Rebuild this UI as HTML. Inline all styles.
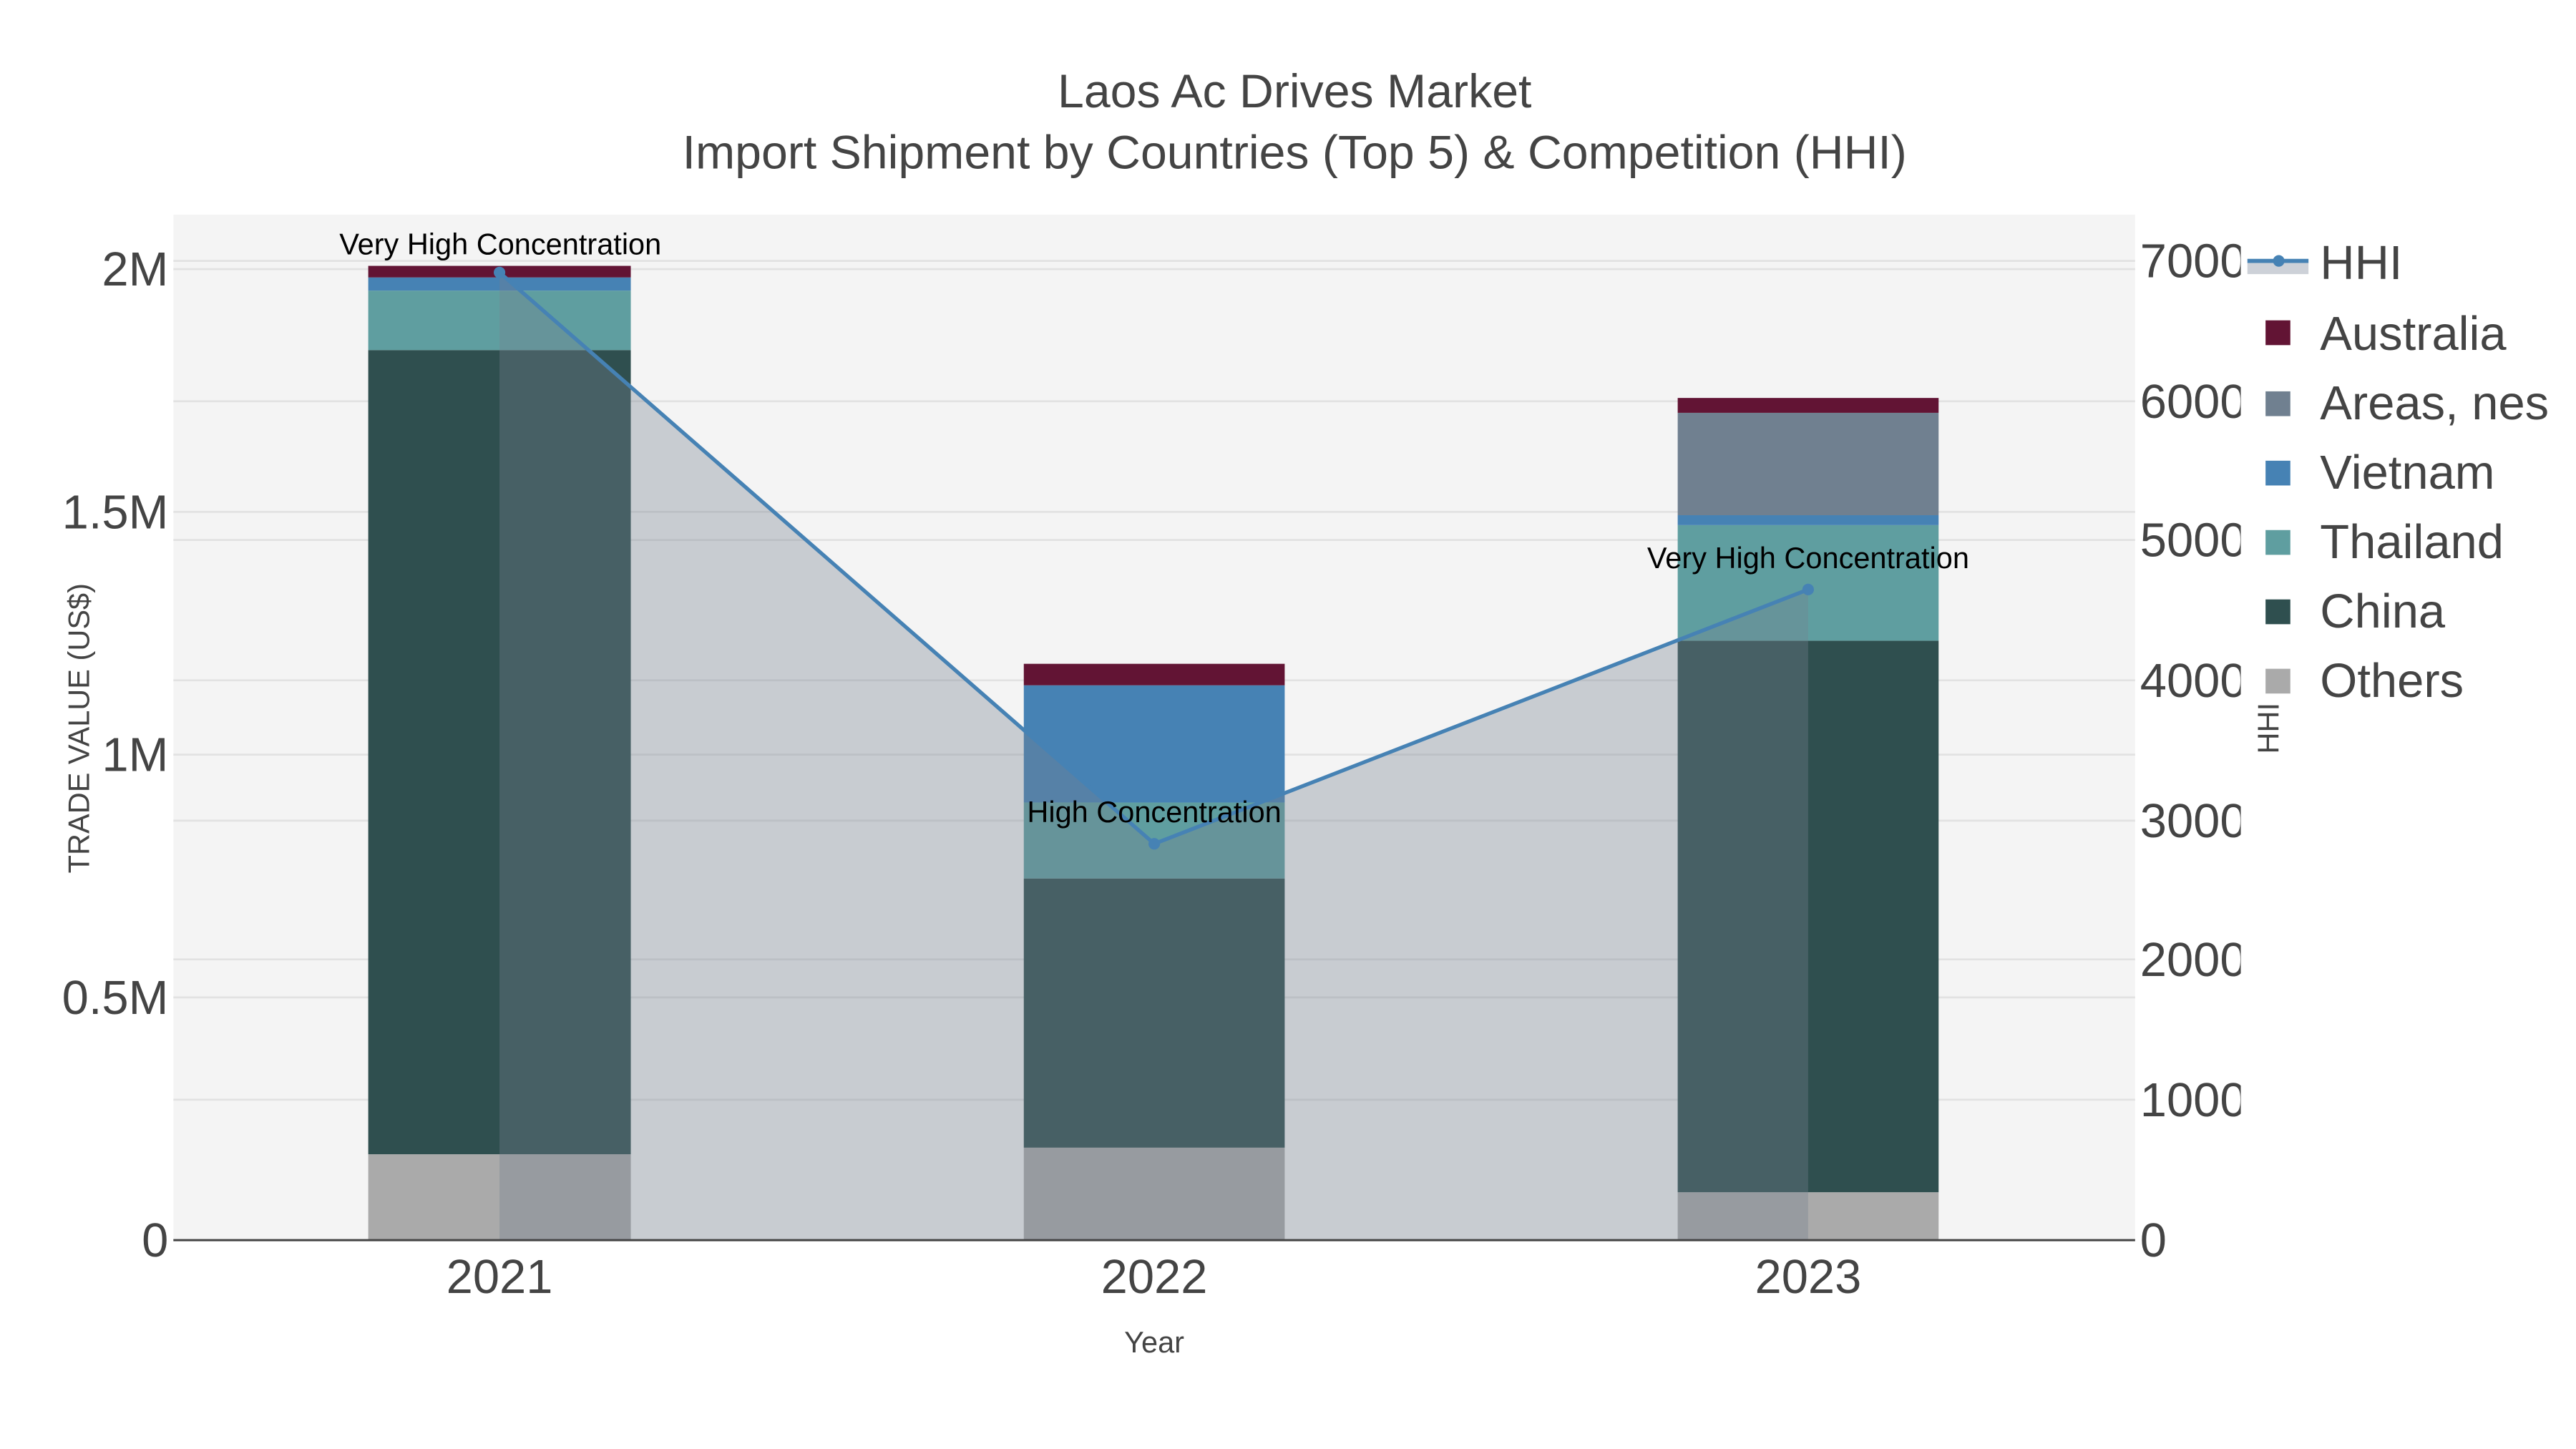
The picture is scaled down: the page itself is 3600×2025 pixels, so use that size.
<!DOCTYPE html>
<html><head><meta charset="utf-8"><style>
html,body{margin:0;padding:0;background:#fff;}
svg{display:block;}
text{font-family:"Liberation Sans",Arial,sans-serif;}
</style></head><body>
<svg width="3600" height="2025" viewBox="0 0 1560 877.5" xmlns="http://www.w3.org/2000/svg">
<rect x="0" y="0" width="1560" height="877.5" fill="#fff"/>
<rect x="105" y="130" width="1188" height="621" fill="#f4f4f4"/>
<g stroke="#e2e2e2" stroke-width="1.2">
<line x1="105" x2="1293" y1="163" y2="163"/><line x1="105" x2="1293" y1="310" y2="310"/>
<line x1="105" x2="1293" y1="457" y2="457"/><line x1="105" x2="1293" y1="604" y2="604"/>
<line x1="105" x2="1293" y1="158" y2="158"/><line x1="105" x2="1293" y1="243" y2="243"/>
<line x1="105" x2="1293" y1="327" y2="327"/><line x1="105" x2="1293" y1="412" y2="412"/>
<line x1="105" x2="1293" y1="497" y2="497"/><line x1="105" x2="1293" y1="581" y2="581"/>
<line x1="105" x2="1293" y1="666" y2="666"/>
</g>
<rect x="223" y="699" width="159" height="52" fill="#aaaaaa"/>
<rect x="223" y="212" width="159" height="487" fill="#2f4f4f"/>
<rect x="223" y="176" width="159" height="36" fill="#5f9ea0"/>
<rect x="223" y="168" width="159" height="8" fill="#4682b4"/>
<rect x="223" y="161" width="159" height="7" fill="#621434"/>
<rect x="620" y="695" width="158" height="56" fill="#aaaaaa"/>
<rect x="620" y="532" width="158" height="163" fill="#2f4f4f"/>
<rect x="620" y="486" width="158" height="46" fill="#5f9ea0"/>
<rect x="620" y="415" width="158" height="71" fill="#4682b4"/>
<rect x="620" y="402" width="158" height="13" fill="#621434"/>
<rect x="1016" y="722" width="158" height="29" fill="#aaaaaa"/>
<rect x="1016" y="388" width="158" height="334" fill="#2f4f4f"/>
<rect x="1016" y="318" width="158" height="70" fill="#5f9ea0"/>
<rect x="1016" y="312" width="158" height="6" fill="#4682b4"/>
<rect x="1016" y="250" width="158" height="62" fill="#708090"/>
<rect x="1016" y="241" width="158" height="9" fill="#621434"/>
<polygon points="302.5,165 699,511 1095,357 1095,751 302.5,751" fill="rgb(118,128,142)" fill-opacity="0.35"/>
<polyline points="302.5,165 699,511 1095,357" fill="none" stroke="#4682b4" stroke-width="2.3"/>
<circle cx="302.5" cy="165" r="3.5" fill="#4682b4"/>
<circle cx="699" cy="511" r="3.5" fill="#4682b4"/>
<circle cx="1095" cy="357" r="3.5" fill="#4682b4"/>
<line x1="105" x2="1293" y1="751" y2="751" stroke="#444" stroke-width="1.3"/>
<g font-size="18" fill="#000" text-anchor="middle">
<text x="303" y="154">Very High Concentration</text>
<text x="699" y="498">High Concentration</text>
<text x="1095" y="344">Very High Concentration</text>
</g>
<g fill="#444" text-anchor="middle" font-size="28.7">
<text x="784" y="65">Laos Ac Drives Market</text>
<text x="784" y="102">Import Shipment by Countries (Top 5) &amp; Competition (HHI)</text>
</g>
<g fill="#444" font-size="29" text-anchor="end">
<text x="102" y="173">2M</text><text x="102" y="320">1.5M</text>
<text x="102" y="467">1M</text><text x="102" y="614">0.5M</text>
<text x="102" y="761">0</text>
</g>
<clipPath id="rc"><rect x="1293" y="100" width="64" height="700"/></clipPath>
<g fill="#444" font-size="29" clip-path="url(#rc)">
<text x="1296" y="168">7000</text><text x="1296" y="253">6000</text>
<text x="1296" y="337">5000</text><text x="1296" y="422">4000</text>
<text x="1296" y="507">3000</text><text x="1296" y="591">2000</text>
<text x="1296" y="676">1000</text><text x="1296" y="761">0</text>
</g>
<g fill="#444" font-size="29" text-anchor="middle">
<text x="302.5" y="783">2021</text><text x="699" y="783">2022</text><text x="1095" y="783">2023</text>
</g>
<text x="699" y="819" fill="#444" font-size="18" text-anchor="middle">Year</text>
<text transform="translate(54,441) rotate(-90)" fill="#444" font-size="18" text-anchor="middle">TRADE VALUE (US$)</text>
<text transform="translate(1380,441) rotate(-90)" fill="#444" font-size="18" text-anchor="middle">HHI</text>
<rect x="1361" y="159" width="37" height="7" fill="#cdd1d8"/>
<line x1="1361" x2="1398" y1="158" y2="158" stroke="#4682b4" stroke-width="2.5"/>
<circle cx="1380" cy="158" r="3.5" fill="#4682b4"/>
<rect x="1372" y="194" width="15" height="15" fill="#621434"/>
<rect x="1372" y="237" width="15" height="15" fill="#708090"/>
<rect x="1372" y="279" width="15" height="15" fill="#4682b4"/>
<rect x="1372" y="321" width="15" height="15" fill="#5f9ea0"/>
<rect x="1372" y="363" width="15" height="15" fill="#2f4f4f"/>
<rect x="1372" y="405" width="15" height="15" fill="#aaaaaa"/>
<g fill="#444" font-size="29">
<text x="1405" y="169">HHI</text><text x="1405" y="212">Australia</text>
<text x="1405" y="254">Areas, nes</text><text x="1405" y="296">Vietnam</text>
<text x="1405" y="338">Thailand</text><text x="1405" y="380">China</text>
<text x="1405" y="422">Others</text>
</g>
</svg>
</body></html>
